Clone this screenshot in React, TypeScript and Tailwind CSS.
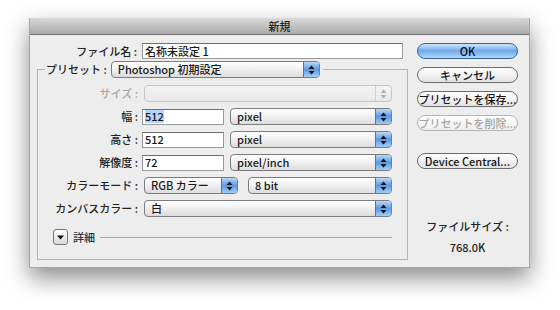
import React from 'react';

const font = { fontFamily: '"Noto Sans CJK JP", "Liberation Sans", sans-serif' };

const Arrows = ({ color = '#111' }: { color?: string }) => (
  <svg width="7" height="10" viewBox="0 0 7 10">
    <polygon points="3.5,0.5 6.5,4 0.5,4" fill={color} />
    <polygon points="0.5,6 6.5,6 3.5,9.5" fill={color} />
  </svg>
);

const PopUp = ({ value, width, disabled }: { value: string; width: string; disabled?: boolean }) => (
  <div
    className={`${width} h-[17px] flex rounded-[4px] border overflow-hidden ${
      disabled ? 'border-[#c4c4c4] bg-gradient-to-b from-[#f4f4f4] to-[#e8e8e8]' : 'border-[#7c7c7c] bg-gradient-to-b from-white via-[#f0f0f0] to-[#dcdcdc]'
    }`}
  >
    <div className="flex-1 pl-[6px] text-[11px] leading-[15px] font-medium text-[#1a1a1a] truncate">{value}</div>
    <div
      className={`w-[16px] flex items-center justify-center border-l ${
        disabled ? 'border-[#d0d0d0]' : 'border-[#4a76b4] bg-gradient-to-b from-[#b9d8f8] via-[#5d9ae4] to-[#9fcdf7]'
      }`}
    >
      <Arrows color={disabled ? '#b0b0b0' : '#111'} />
    </div>
  </div>
);

const TextField = ({ value, width, selected }: { value: string; width: string; selected?: boolean }) => (
  <div className={`${width} h-[16px] bg-white border border-[#9a9a9a] border-t-[#6f6f6f] pl-[2px] flex items-center`}>
    <span className={`text-[11px] leading-[13px] font-medium text-[#1a1a1a] ${selected ? 'bg-[#b5d5ff]' : ''}`}>{value}</span>
  </div>
);

const AquaButton = ({ label, primary, disabled }: { label: string; primary?: boolean; disabled?: boolean }) => (
  <div
    className={`h-[16px] w-[101px] rounded-full border flex items-center justify-center text-[11px] font-medium leading-none whitespace-nowrap ${
      primary
        ? 'border-[#35629f] bg-gradient-to-b from-[#cfe4fb] via-[#6ea9ea] to-[#b3dafc] text-[#0d0d0d]'
        : disabled
        ? 'border-[#b5b5b5] bg-gradient-to-b from-white to-[#eeeeee] text-[#a3a3a3]'
        : 'border-[#6b6b6b] bg-gradient-to-b from-white via-[#f2f2f2] to-[#e2e2e2] text-[#141414]'
    }`}
  >
    {label}
  </div>
);

const Row = ({ label, disabled, children }: { label: string; disabled?: boolean; children: React.ReactNode }) => (
  <div className="flex items-center h-[17px]">
    <div className={`w-[97px] text-right text-[11px] font-medium pr-[4px] ${disabled ? 'text-[#a8a8a8]' : 'text-[#222]'}`}>{label}</div>
    {children}
  </div>
);

export default function App() {
  return (
    <div className="w-[560px] h-[310px] bg-white pt-[18px] pl-[29px]" style={font}>
      <div className="w-[501px] h-[250px] bg-[#ededed] flex flex-col shadow-[0_10px_22px_rgba(0,0,0,0.45)] border-x border-b border-[#a5a5a5]">
        <div className="h-[17px] bg-gradient-to-b from-[#d9d9d9] to-[#ababab] border-b border-[#6f6f6f] flex items-center justify-center text-[11px] font-medium text-[#222]">
          新規
        </div>
        <div className="flex flex-1">
          <div className="w-[387px] pt-[8px]">
            <div className="flex items-center h-[16px]">
              <div className="w-[111px] text-right text-[11px] font-medium text-[#222] pr-[4px]">ファイル名 :</div>
              <div className="ml-[1px]"><TextField value="名称未設定 1" width="w-[261px]" /></div>
            </div>
            <fieldset className="ml-[7px] mt-[2px] w-[366px] border border-[#b3b3b3] pl-[7px] pr-[15px] pb-[13px]">
              <legend className="flex items-center h-[17px] pr-[3px]">
                <span className="text-[11px] font-medium text-[#222] pl-[1px] pr-[4px]">プリセット :</span>
                <PopUp value="Photoshop 初期設定" width="w-[209px]" />
              </legend>
              <div className="flex flex-col gap-[6px] mt-[7px]">
                <Row label="サイズ :" disabled>
                  <div className="ml-[2px]"><PopUp value="" width="w-[248px]" disabled /></div>
                </Row>
                <Row label="幅 :">
                  <TextField value="512" width="w-[82px]" selected />
                  <div className="ml-[6px]"><PopUp value="pixel" width="w-[162px]" /></div>
                </Row>
                <Row label="高さ :">
                  <TextField value="512" width="w-[82px]" />
                  <div className="ml-[6px]"><PopUp value="pixel" width="w-[162px]" /></div>
                </Row>
                <Row label="解像度 :">
                  <TextField value="72" width="w-[82px]" />
                  <div className="ml-[6px]"><PopUp value="pixel/inch" width="w-[162px]" /></div>
                </Row>
                <Row label="カラーモード :">
                  <div className="ml-[2px]"><PopUp value="RGB カラー" width="w-[94px]" /></div>
                  <div className="ml-[10px]"><PopUp value="8 bit" width="w-[144px]" /></div>
                </Row>
                <Row label="カンバスカラー :">
                  <div className="ml-[2px]"><PopUp value="白" width="w-[248px]" /></div>
                </Row>
              </div>
              <div className="flex items-center mt-[12px] pl-[8px]">
                <div className="w-[15px] h-[16px] rounded-[3px] border border-[#777] bg-gradient-to-b from-white to-[#d8d8d8] flex items-center justify-center">
                  <svg width="7" height="5" viewBox="0 0 7 5"><polygon points="0,0.5 7,0.5 3.5,4.5" fill="#111" /></svg>
                </div>
                <span className="ml-[5px] text-[11px] font-medium text-[#333]">詳細</span>
                <div className="flex-1 ml-[5px] h-px bg-[#a8a8a8]" />
              </div>
            </fieldset>
          </div>
          <div className="pt-[8px] flex flex-col items-center">
            <div className="flex flex-col gap-[8px]">
              <AquaButton label="OK" primary />
              <AquaButton label="キャンセル" />
              <AquaButton label="プリセットを保存..." />
              <AquaButton label="プリセットを削除..." disabled />
            </div>
            <div className="mt-[22px]">
              <AquaButton label="Device Central..." />
            </div>
            <div className="mt-[49px] text-[11px] font-medium text-[#222] leading-[16px]">ファイルサイズ :</div>
            <div className="mt-[5px] text-[11px] font-medium text-[#222] leading-[16px]">768.0K</div>
          </div>
        </div>
      </div>
    </div>
  );
}
